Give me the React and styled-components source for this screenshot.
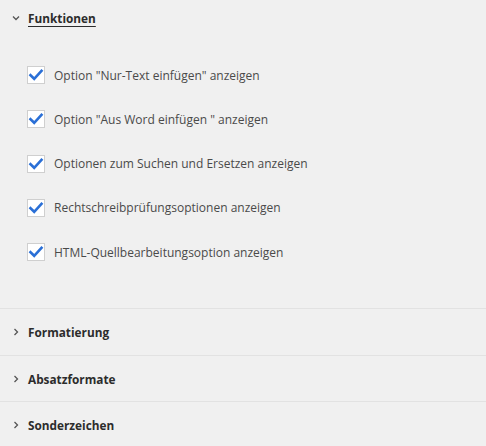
import styled, { createGlobalStyle } from "styled-components";

const GlobalStyle = createGlobalStyle`
    html, body {
        margin: 0;
        padding: 0;
        background: #f0f0f0;
    }
    body {
        font-family: "Open Sans", "Noto Sans", sans-serif;
    }
`;

const Panel = styled.div`
    width: 486px;
    height: 446px;
    background: #f0f0f0;
    overflow: hidden;
`;

const Section = styled.section`
    border-top: ${({ $first }) => ($first ? "none" : "1px solid #e2e2e2")};
`;

const Header = styled.div`
    display: flex;
    align-items: center;
    height: ${({ $open }) => ($open ? "36px" : "45.5px")};
    padding-left: 12px;
    gap: 8px;
    cursor: pointer;
`;

const Title = styled.span`
    font-size: 11.8px;
    font-weight: 700;
    color: #2c2c2c;
    text-decoration: ${({ $open }) => ($open ? "underline" : "none")};
    text-underline-offset: 3px;
    text-decoration-thickness: 1px;
`;

const Body = styled.div`
    display: flex;
    flex-direction: column;
    padding: 17px 0 34px 27px;
`;

const Row = styled.label`
    display: flex;
    align-items: center;
    height: 44.25px;
    gap: 9px;
`;

const Box = styled.span`
    display: flex;
    align-items: center;
    justify-content: center;
    width: 18px;
    height: 18px;
    box-sizing: border-box;
    border: 1px solid #cfcfcf;
    background: #fff;
`;

const Label = styled.span`
    font-size: 12px;
    color: #4a4a4a;
`;

const Chevron = ({ open }) => (
    <svg width="8" height="8" viewBox="0 0 8 8">
        <path
            d={open ? "M1 2.5 L4 5.5 L7 2.5" : "M2.5 1 L5.5 4 L2.5 7"}
            fill="none"
            stroke="#555"
            strokeWidth="1.3"
        />
    </svg>
);

const Check = () => (
    <svg width="16" height="16" viewBox="0 0 16 16">
        <path
            d="M2.5 8.2 L6.2 11.8 L13.5 3.8"
            fill="none"
            stroke="#2a6fd6"
            strokeWidth="2.6"
            strokeLinecap="square"
        />
    </svg>
);

const options = [
    'Option "Nur-Text einfügen" anzeigen',
    'Option "Aus Word einfügen " anzeigen',
    "Optionen zum Suchen und Ersetzen anzeigen",
    "Rechtschreibprüfungsoptionen anzeigen",
    "HTML-Quellbearbeitungsoption anzeigen",
];

const collapsed = ["Formatierung", "Absatzformate", "Sonderzeichen"];

export default function App() {
    return (
        <Panel>
            <GlobalStyle />
            <Section $first>
                <Header $open>
                    <Chevron open />
                    <Title $open>Funktionen</Title>
                </Header>
                <Body>
                    {options.map((opt) => (
                        <Row key={opt}>
                            <Box>
                                <Check />
                            </Box>
                            <Label>{opt}</Label>
                        </Row>
                    ))}
                </Body>
            </Section>
            {collapsed.map((name) => (
                <Section key={name}>
                    <Header>
                        <Chevron />
                        <Title>{name}</Title>
                    </Header>
                </Section>
            ))}
        </Panel>
    );
}
